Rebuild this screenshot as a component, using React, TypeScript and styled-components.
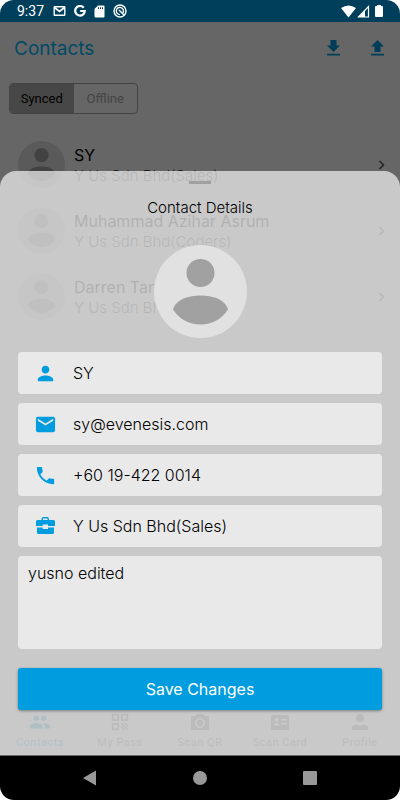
import React from "react";
import styled, { createGlobalStyle } from "styled-components";
import { MdPerson, MdEmail, MdPhone, MdPeople, MdQrCode } from "react-icons/md";

const Global = createGlobalStyle`
  * { box-sizing: border-box; }
  body { margin: 0; background: #fff; font-family: Inter, "Noto Sans", sans-serif; font-weight: 300; }
  button, input, textarea { font: inherit; }
  svg { display: block; flex: none; }
`;

const Phone = styled.div`
  min-height: 100vh;
  display: flex;
  flex-direction: column;
  border-radius: 14px;
  overflow: hidden;
  background: #fff;
`;

const StatusBar = styled.header`
  height: 22px;
  display: flex;
  align-items: center;
  justify-content: space-between;
  padding: 0 15px 0 17px;
  background: #003f5b;
  color: #fff;
`;

const StatusGroup = styled.div<{ $gap: number }>`
  display: flex;
  align-items: center;
  gap: ${(p) => p.$gap}px;
`;

const Clock = styled.span`
  font: 14px/22px Roboto, sans-serif;
  width: 27px;
`;

const Stage = styled.div`
  position: relative;
  flex: 1;
  display: flex;
  flex-direction: column;
`;

const Screen = styled.main`
  flex: 1;
  display: flex;
  flex-direction: column;
`;

const AppBar = styled.div`
  display: flex;
  align-items: center;
  justify-content: space-between;
  height: 61px;
  padding: 0 12px 8px 14px;
`;

const Title = styled.h1`
  margin: 0;
  color: #00bbff;
  font-size: 19px;
  font-weight: 400;
  line-height: 24px;
`;

const Actions = styled.div`
  display: flex;
  gap: 23px;
`;

const IconButton = styled.button`
  display: block;
  padding: 0;
  border: 0;
  background: none;
  color: #0099dd;
`;

const Segments = styled.div`
  align-self: flex-start;
  display: flex;
  margin-left: 9px;
  width: 129px;
  height: 31px;
  border: 1px solid #aaa;
  border-radius: 4px;
  overflow: hidden;
`;

const Segment = styled.button<{ $active?: boolean }>`
  flex: 1;
  padding: 0;
  border: 0;
  background: ${(p) => (p.$active ? "#b2b2b2" : "transparent")};
  color: ${(p) => (p.$active ? "#000" : "#aaa")};
  font: 13px/20px Roboto, sans-serif;
`;

const List = styled.ul`
  list-style: none;
  margin: 18px 14px 0 18px;
  padding: 0;
`;

const Contact = styled.li`
  display: flex;
  align-items: center;
  gap: 9px;
  height: 66px;
  border-bottom: 1px solid #f2f2f2;
`;

const ContactText = styled.div`
  flex: 1;
  display: flex;
  flex-direction: column;
`;

const Name = styled.span`
  font-size: 16px;
  font-weight: 400;
  line-height: 22px;
`;

const Company = styled.span`
  color: #444;
  font-size: 15px;
  line-height: 20px;
`;

const Tabs = styled.nav`
  display: grid;
  grid-template-columns: repeat(5, 1fr);
  margin-top: auto;
  padding-bottom: 6px;
`;

const Tab = styled.a<{ $active?: boolean }>`
  display: flex;
  flex-direction: column;
  align-items: center;
  gap: 3px;
  color: ${(p) => (p.$active ? "#0099dd" : "#777")};
  font: 11px/14px Roboto, sans-serif;
  letter-spacing: 0.5px;
  text-decoration: none;
`;

const TabIcon = styled.span`
  display: flex;
  align-items: center;
  height: 22px;
`;

const Backdrop = styled.div`
  position: absolute;
  inset: 0;
  background: rgba(0, 0, 0, 0.6);
`;

const Sheet = styled.form`
  position: absolute;
  left: 0;
  right: 0;
  bottom: 1px;
  display: flex;
  flex-direction: column;
  align-items: center;
  padding: 10px 18px 45px;
  border-radius: 16px 16px 0 0;
  background: rgba(235, 235, 235, 0.75);
`;

const Handle = styled.div`
  width: 22px;
  height: 3px;
  background: #a0a0a0;
`;

const SheetTitle = styled.h2`
  margin: 14px 0 27px;
  font-size: 15px;
  font-weight: 300;
  line-height: 20px;
`;

const Fields = styled.div`
  align-self: stretch;
  display: flex;
  flex-direction: column;
  gap: 9px;
  margin: 14px 0 19px;
`;

const Field = styled.label`
  display: flex;
  align-items: center;
  gap: 15px;
  height: 42px;
  padding: 0 15px;
  border-radius: 4px;
  background: #e9e9e9;
  color: #009ce0;
`;

const FieldIcon = styled.span`
  display: flex;
  justify-content: center;
  width: 25px;
`;

const FieldInput = styled.input`
  flex: 1;
  min-width: 0;
  padding: 0;
  border: 0;
  outline: 0;
  background: none;
  color: #000;
  font-size: 16px;
  line-height: 22px;
`;

const Notes = styled.textarea`
  display: block;
  height: 93px;
  padding: 6px 10px;
  border: 0;
  border-radius: 4px;
  outline: 0;
  resize: none;
  background: #e9e9e9;
  color: #000;
  font-size: 16px;
  line-height: 22px;
`;

const Save = styled.button`
  align-self: stretch;
  height: 42px;
  padding: 0;
  border: 0;
  border-radius: 3px;
  background: #009ce0;
  box-shadow: 0 1px 3px rgba(0, 0, 0, 0.4);
  color: #fff;
  font-size: 16px;
  font-weight: 400;
`;

const SystemNav = styled.footer`
  display: flex;
  justify-content: center;
  align-items: center;
  gap: 94px;
  height: 44px;
  background: #000;
`;

const SystemButton = styled(IconButton)`
  color: #999;
`;

const Avatar = ({ size, disc, fill }: { size: number; disc: string; fill: string }) => (
  <svg width={size} height={size} viewBox="0 0 93 93" aria-hidden>
    <circle cx="46.5" cy="46.5" r="46.5" fill={disc} />
    <circle cx="46.5" cy="28" r="14" fill={fill} />
    <path d="M19 64.500C22 54 35 50.500 46.500 50.500S71 54 74 64.500C68 74 58 79.500 46.500 79.500S25 74 19 64.500Z" fill={fill} />
  </svg>
);

const Arrow = ({ up }: { up?: boolean }) => (
  <svg width="21" height="20" viewBox="0 0 21 20" fill="currentColor" aria-hidden>
    <path d={up ? "M10.500 1L17 7.500H13.500V13H7.500V7.500H4Z" : "M7.500 1H13.500V6.500H17L10.500 13L4 6.500H7.500Z"} />
    <path d="M4 14.700H17V16.500H4Z" />
  </svg>
);

const Chevron = () => (
  <svg width="10" height="12" viewBox="0 0 10 12" fill="none" stroke="#555" strokeWidth="1.5" aria-hidden>
    <path d="M3.500 2L7.500 6L3.500 10" />
  </svg>
);

const Briefcase = () => (
  <svg width="25" height="24" viewBox="0 0 25 24" fill="currentColor" aria-hidden>
    <path fillRule="evenodd" d="M8.500 6V5Q8.500 3 10.500 3H14Q16 3 16 5V6H20.500Q22 6 22 7.500V12H15V10.500H9.700V12H3V7.500Q3 6 4.500 6ZM10 6H14.600V5Q14.600 4.400 14 4.400H10.600Q10 4.400 10 5Z" />
    <path d="M4 13.400H9.700V15H15V13.400H21V18.500Q21 20 19.500 20H5.500Q4 20 4 18.500Z" />
    <path d="M10.700 11.500H14V14H10.700Z" fill="#e9e9e9" />
  </svg>
);

const Camera = () => (
  <svg width="22" height="20" viewBox="0 0 22 20" fill="currentColor" aria-hidden>
    <path fillRule="evenodd" d="M3.500 4H6.500L8 2H14L15.500 4H18.500Q20 4 20 5.500V16.500Q20 18 18.500 18H3.500Q2 18 2 16.500V5.500Q2 4 3.500 4ZM11 6A5 5 0 1 0 11 16A5 5 0 1 0 11 6ZM11 7.800A3.200 3.200 0 1 1 11 14.200A3.200 3.200 0 1 1 11 7.800Z" />
  </svg>
);

const Card = () => (
  <svg width="22" height="20" viewBox="0 0 22 20" fill="currentColor" aria-hidden>
    <path fillRule="evenodd" d="M3.500 3H18.500Q20 3 20 4.500V16.500Q20 18 18.500 18H3.500Q2 18 2 16.500V4.500Q2 3 3.500 3ZM7.500 6A2 2 0 1 0 7.500 10A2 2 0 1 0 7.500 6ZM4.500 13.500H10.500Q10.500 11 7.500 11T4.500 13.500ZM12 7V8.500H17.500V7ZM12 11V12.500H17.500V11Z" />
  </svg>
);

const Profile = () => (
  <svg width="20" height="20" viewBox="0 0 20 20" fill="currentColor" aria-hidden>
    <circle cx="10" cy="6" r="4" />
    <path d="M2 18V16Q2 12.500 6.500 12.500Q10 15 13.500 12.500Q18 12.500 18 16V18Z" />
  </svg>
);

const StatusIcons = () => (
  <StatusGroup $gap={8} aria-hidden>
    <svg width="13" height="12" viewBox="0 0 13 12">
      <rect x="1.200" y="1.700" width="10.600" height="8.600" rx=".5" fill="none" stroke="#fff" strokeWidth="1.400" />
      <path d="M1.500 2.500L6.500 6.500L11.500 2.500" fill="none" stroke="#fff" strokeWidth="1.700" />
    </svg>
    <svg width="12" height="12" viewBox="0 0 12 12" fill="none" stroke="#fff" strokeWidth="2.200">
      <path d="M9.700 2.700A4.800 4.800 0 1 0 10.800 6H6.200" />
    </svg>
    <svg width="11" height="13" viewBox="0 0 11 13">
      <path d="M4 .5H9.500Q10.500 .5 10.500 1.500V11.500Q10.500 12.500 9.500 12.500H1.500Q.5 12.500 .5 11.500V4Z" fill="#fff" />
      <path d="M4.500 2.300V4M6.500 2.300V4M8.500 2.300V4" stroke="#003f5b" />
    </svg>
    <svg width="14" height="14" viewBox="0 0 14 14" fill="none" stroke="#fff" strokeWidth="1.400">
      <circle cx="7" cy="7" r="6" />
      <path d="M10 8.800A3.600 3.600 0 1 0 7 10.600M6 6L11 11" />
    </svg>
  </StatusGroup>
);

const contacts = [
  { name: "SY", company: "Y Us Sdn Bhd(Sales)" },
  { name: "Muhammad Azihar Asrum", company: "Y Us Sdn Bhd(Coders)" },
  { name: "Darren Tan", company: "Y Us Sdn Bhd" },
];

const tabs = [
  { label: "Contacts", icon: <MdPeople size={22} />, active: true },
  { label: "My Pass", icon: <MdQrCode size={22} /> },
  { label: "Scan QR", icon: <Camera /> },
  { label: "Scan Card", icon: <Card /> },
  { label: "Profile", icon: <Profile /> },
];

const fields = [
  { label: "Name", type: "text", value: "SY", icon: <MdPerson size={23} /> },
  { label: "Email", type: "email", value: "sy@evenesis.com", icon: <MdEmail size={23} /> },
  { label: "Phone", type: "tel", value: "+60 19-422 0014", icon: <MdPhone size={23} /> },
  { label: "Company", type: "text", value: "Y Us Sdn Bhd(Sales)", icon: <Briefcase /> },
];

export default function App() {
  return (
    <>
      <Global />
      <Phone>
        <StatusBar>
          <StatusGroup $gap={9}>
            <Clock>9:37</Clock>
            <StatusIcons />
          </StatusGroup>
          <StatusGroup $gap={1} aria-hidden>
            <svg width="15" height="13" viewBox="0 0 15 13" fill="#fff"><path d="M0 3Q7.500-2 15 3L7.500 12.500Z" /></svg>
            <svg width="13" height="13" viewBox="0 0 13 13" fill="none" stroke="#fff">
              <path d="M1.500 12H11.500V1.500Z" strokeWidth="1.200" />
              <path d="M2 12H8V5.500Z" fill="#fff" stroke="none" />
            </svg>
            <svg width="14" height="14" viewBox="0 0 14 14" fill="#fff"><path d="M6 2V1H10V2H11Q12 2 12 3V12Q12 13 11 13H5Q4 13 4 12V3Q4 2 5 2Z" /></svg>
          </StatusGroup>
        </StatusBar>
        <Stage>
          <Screen>
            <AppBar>
              <Title>Contacts</Title>
              <Actions>
                <IconButton aria-label="Download"><Arrow /></IconButton>
                <IconButton aria-label="Upload"><Arrow up /></IconButton>
              </Actions>
            </AppBar>
            <Segments>
              <Segment $active>Synced</Segment>
              <Segment>Offline</Segment>
            </Segments>
            <List>
              {contacts.map((c) => (
                <Contact key={c.name}>
                  <Avatar size={47} disc="#e0e0e0" fill="#a6a6a6" />
                  <ContactText>
                    <Name>{c.name}</Name>
                    <Company>{c.company}</Company>
                  </ContactText>
                  <Chevron />
                </Contact>
              ))}
            </List>
            <Tabs>
              {tabs.map((t) => (
                <Tab key={t.label} href="#" $active={t.active}>
                  <TabIcon>{t.icon}</TabIcon>
                  {t.label}
                </Tab>
              ))}
            </Tabs>
          </Screen>
          <Backdrop />
          <Sheet onSubmit={(e) => e.preventDefault()}>
            <Handle />
            <SheetTitle>Contact Details</SheetTitle>
            <Avatar size={93} disc="#e1e1e1" fill="#a1a1a1" />
            <Fields>
              {fields.map((f) => (
                <Field key={f.label}>
                  <FieldIcon>{f.icon}</FieldIcon>
                  <FieldInput aria-label={f.label} type={f.type} defaultValue={f.value} />
                </Field>
              ))}
              <Notes aria-label="Notes" defaultValue="yusno edited" />
            </Fields>
            <Save type="submit">Save Changes</Save>
          </Sheet>
        </Stage>
        <SystemNav>
          <SystemButton aria-label="Back">
            <svg width="16" height="16" viewBox="0 0 16 16" fill="currentColor"><path d="M1 8L14 .5V15.500Z" /></svg>
          </SystemButton>
          <SystemButton aria-label="Home">
            <svg width="16" height="16" viewBox="0 0 16 16" fill="currentColor"><circle cx="8" cy="8" r="7" /></svg>
          </SystemButton>
          <SystemButton aria-label="Recent apps">
            <svg width="16" height="16" viewBox="0 0 16 16" fill="currentColor"><rect x="1" y="1" width="14" height="14" rx="1" /></svg>
          </SystemButton>
        </SystemNav>
      </Phone>
    </>
  );
}
